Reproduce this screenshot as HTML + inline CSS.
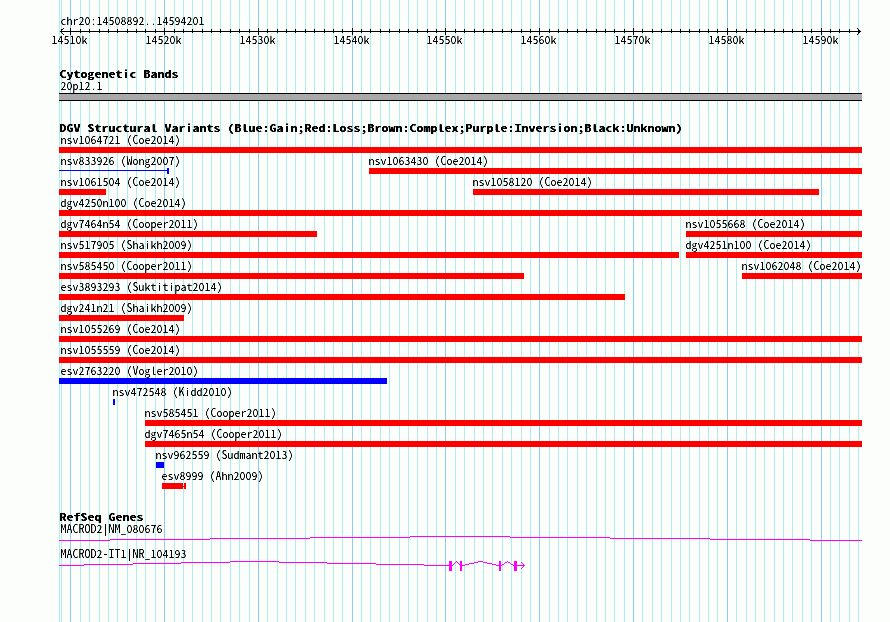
<!DOCTYPE html>
<html lang="en"><head><meta charset="utf-8"><title>chr20:14508892..14594201</title>
<style>
html,body{margin:0;padding:0;background:#fcfefb;}
body{width:890px;height:622px;overflow:hidden;}
svg{display:block;}
.s{font-family:"Noto Sans Mono CJK JP","DejaVu Sans Mono","Liberation Mono",monospace;font-size:12px;fill:#000;}
.b{font-family:"Noto Sans Mono CJK JP","DejaVu Sans Mono","Liberation Mono",monospace;font-size:14px;font-weight:bold;fill:#000;}
</style></head><body>
<svg width="890" height="622" viewBox="0 0 890 622" shape-rendering="crispEdges">
<rect x="0" y="0" width="890" height="622" fill="#fcfefb"/>
<g id="grid">
<rect x="59" y="0" width="1" height="622" fill="#b0eeee"/>
<rect x="61" y="0" width="1" height="622" fill="#b0eeee"/>
<rect x="70" y="0" width="1" height="622" fill="#8ccdf0"/>
<rect x="80" y="0" width="1" height="622" fill="#b0eeee"/>
<rect x="89" y="0" width="1" height="622" fill="#b0eeee"/>
<rect x="99" y="0" width="1" height="622" fill="#b0eeee"/>
<rect x="108" y="0" width="1" height="622" fill="#b0eeee"/>
<rect x="117" y="0" width="1" height="622" fill="#b0eeee"/>
<rect x="127" y="0" width="1" height="622" fill="#b0eeee"/>
<rect x="136" y="0" width="1" height="622" fill="#b0eeee"/>
<rect x="145" y="0" width="1" height="622" fill="#b0eeee"/>
<rect x="155" y="0" width="1" height="622" fill="#b0eeee"/>
<rect x="164" y="0" width="1" height="622" fill="#8ccdf0"/>
<rect x="174" y="0" width="1" height="622" fill="#b0eeee"/>
<rect x="183" y="0" width="1" height="622" fill="#b0eeee"/>
<rect x="192" y="0" width="1" height="622" fill="#b0eeee"/>
<rect x="202" y="0" width="1" height="622" fill="#b0eeee"/>
<rect x="211" y="0" width="1" height="622" fill="#b0eeee"/>
<rect x="220" y="0" width="1" height="622" fill="#b0eeee"/>
<rect x="230" y="0" width="1" height="622" fill="#b0eeee"/>
<rect x="239" y="0" width="1" height="622" fill="#b0eeee"/>
<rect x="249" y="0" width="1" height="622" fill="#b0eeee"/>
<rect x="258" y="0" width="1" height="622" fill="#8ccdf0"/>
<rect x="267" y="0" width="1" height="622" fill="#b0eeee"/>
<rect x="277" y="0" width="1" height="622" fill="#b0eeee"/>
<rect x="286" y="0" width="1" height="622" fill="#b0eeee"/>
<rect x="295" y="0" width="1" height="622" fill="#b0eeee"/>
<rect x="305" y="0" width="1" height="622" fill="#b0eeee"/>
<rect x="314" y="0" width="1" height="622" fill="#b0eeee"/>
<rect x="324" y="0" width="1" height="622" fill="#b0eeee"/>
<rect x="333" y="0" width="1" height="622" fill="#b0eeee"/>
<rect x="342" y="0" width="1" height="622" fill="#b0eeee"/>
<rect x="352" y="0" width="1" height="622" fill="#8ccdf0"/>
<rect x="361" y="0" width="1" height="622" fill="#b0eeee"/>
<rect x="370" y="0" width="1" height="622" fill="#b0eeee"/>
<rect x="380" y="0" width="1" height="622" fill="#b0eeee"/>
<rect x="389" y="0" width="1" height="622" fill="#b0eeee"/>
<rect x="399" y="0" width="1" height="622" fill="#b0eeee"/>
<rect x="408" y="0" width="1" height="622" fill="#b0eeee"/>
<rect x="417" y="0" width="1" height="622" fill="#b0eeee"/>
<rect x="427" y="0" width="1" height="622" fill="#b0eeee"/>
<rect x="436" y="0" width="1" height="622" fill="#b0eeee"/>
<rect x="445" y="0" width="1" height="622" fill="#8ccdf0"/>
<rect x="455" y="0" width="1" height="622" fill="#b0eeee"/>
<rect x="464" y="0" width="1" height="622" fill="#b0eeee"/>
<rect x="474" y="0" width="1" height="622" fill="#b0eeee"/>
<rect x="483" y="0" width="1" height="622" fill="#b0eeee"/>
<rect x="492" y="0" width="1" height="622" fill="#b0eeee"/>
<rect x="502" y="0" width="1" height="622" fill="#b0eeee"/>
<rect x="511" y="0" width="1" height="622" fill="#b0eeee"/>
<rect x="521" y="0" width="1" height="622" fill="#b0eeee"/>
<rect x="530" y="0" width="1" height="622" fill="#b0eeee"/>
<rect x="539" y="0" width="1" height="622" fill="#8ccdf0"/>
<rect x="549" y="0" width="1" height="622" fill="#b0eeee"/>
<rect x="558" y="0" width="1" height="622" fill="#b0eeee"/>
<rect x="567" y="0" width="1" height="622" fill="#b0eeee"/>
<rect x="577" y="0" width="1" height="622" fill="#b0eeee"/>
<rect x="586" y="0" width="1" height="622" fill="#b0eeee"/>
<rect x="596" y="0" width="1" height="622" fill="#b0eeee"/>
<rect x="605" y="0" width="1" height="622" fill="#b0eeee"/>
<rect x="614" y="0" width="1" height="622" fill="#b0eeee"/>
<rect x="624" y="0" width="1" height="622" fill="#b0eeee"/>
<rect x="633" y="0" width="1" height="622" fill="#8ccdf0"/>
<rect x="642" y="0" width="1" height="622" fill="#b0eeee"/>
<rect x="652" y="0" width="1" height="622" fill="#b0eeee"/>
<rect x="661" y="0" width="1" height="622" fill="#b0eeee"/>
<rect x="671" y="0" width="1" height="622" fill="#b0eeee"/>
<rect x="680" y="0" width="1" height="622" fill="#b0eeee"/>
<rect x="689" y="0" width="1" height="622" fill="#b0eeee"/>
<rect x="699" y="0" width="1" height="622" fill="#b0eeee"/>
<rect x="708" y="0" width="1" height="622" fill="#b0eeee"/>
<rect x="717" y="0" width="1" height="622" fill="#b0eeee"/>
<rect x="727" y="0" width="1" height="622" fill="#8ccdf0"/>
<rect x="736" y="0" width="1" height="622" fill="#b0eeee"/>
<rect x="746" y="0" width="1" height="622" fill="#b0eeee"/>
<rect x="755" y="0" width="1" height="622" fill="#b0eeee"/>
<rect x="764" y="0" width="1" height="622" fill="#b0eeee"/>
<rect x="774" y="0" width="1" height="622" fill="#b0eeee"/>
<rect x="783" y="0" width="1" height="622" fill="#b0eeee"/>
<rect x="792" y="0" width="1" height="622" fill="#b0eeee"/>
<rect x="802" y="0" width="1" height="622" fill="#b0eeee"/>
<rect x="811" y="0" width="1" height="622" fill="#b0eeee"/>
<rect x="821" y="0" width="1" height="622" fill="#8ccdf0"/>
<rect x="830" y="0" width="1" height="622" fill="#b0eeee"/>
<rect x="839" y="0" width="1" height="622" fill="#b0eeee"/>
<rect x="849" y="0" width="1" height="622" fill="#b0eeee"/>
<rect x="858" y="0" width="1" height="622" fill="#b0eeee"/>
</g>
<g id="ruler" fill="#000">
<rect x="60" y="31" width="801" height="1"/>
<rect x="61" y="29" width="1" height="4"/>
<rect x="70" y="28" width="1" height="7"/>
<rect x="80" y="29" width="1" height="4"/>
<rect x="89" y="29" width="1" height="4"/>
<rect x="99" y="29" width="1" height="4"/>
<rect x="108" y="29" width="1" height="4"/>
<rect x="117" y="29" width="1" height="4"/>
<rect x="127" y="29" width="1" height="4"/>
<rect x="136" y="29" width="1" height="4"/>
<rect x="145" y="29" width="1" height="4"/>
<rect x="155" y="29" width="1" height="4"/>
<rect x="164" y="28" width="1" height="7"/>
<rect x="174" y="29" width="1" height="4"/>
<rect x="183" y="29" width="1" height="4"/>
<rect x="192" y="29" width="1" height="4"/>
<rect x="202" y="29" width="1" height="4"/>
<rect x="211" y="29" width="1" height="4"/>
<rect x="220" y="29" width="1" height="4"/>
<rect x="230" y="29" width="1" height="4"/>
<rect x="239" y="29" width="1" height="4"/>
<rect x="249" y="29" width="1" height="4"/>
<rect x="258" y="28" width="1" height="7"/>
<rect x="267" y="29" width="1" height="4"/>
<rect x="277" y="29" width="1" height="4"/>
<rect x="286" y="29" width="1" height="4"/>
<rect x="295" y="29" width="1" height="4"/>
<rect x="305" y="29" width="1" height="4"/>
<rect x="314" y="29" width="1" height="4"/>
<rect x="324" y="29" width="1" height="4"/>
<rect x="333" y="29" width="1" height="4"/>
<rect x="342" y="29" width="1" height="4"/>
<rect x="352" y="28" width="1" height="7"/>
<rect x="361" y="29" width="1" height="4"/>
<rect x="370" y="29" width="1" height="4"/>
<rect x="380" y="29" width="1" height="4"/>
<rect x="389" y="29" width="1" height="4"/>
<rect x="399" y="29" width="1" height="4"/>
<rect x="408" y="29" width="1" height="4"/>
<rect x="417" y="29" width="1" height="4"/>
<rect x="427" y="29" width="1" height="4"/>
<rect x="436" y="29" width="1" height="4"/>
<rect x="445" y="28" width="1" height="7"/>
<rect x="455" y="29" width="1" height="4"/>
<rect x="464" y="29" width="1" height="4"/>
<rect x="474" y="29" width="1" height="4"/>
<rect x="483" y="29" width="1" height="4"/>
<rect x="492" y="29" width="1" height="4"/>
<rect x="502" y="29" width="1" height="4"/>
<rect x="511" y="29" width="1" height="4"/>
<rect x="521" y="29" width="1" height="4"/>
<rect x="530" y="29" width="1" height="4"/>
<rect x="539" y="28" width="1" height="7"/>
<rect x="549" y="29" width="1" height="4"/>
<rect x="558" y="29" width="1" height="4"/>
<rect x="567" y="29" width="1" height="4"/>
<rect x="577" y="29" width="1" height="4"/>
<rect x="586" y="29" width="1" height="4"/>
<rect x="596" y="29" width="1" height="4"/>
<rect x="605" y="29" width="1" height="4"/>
<rect x="614" y="29" width="1" height="4"/>
<rect x="624" y="29" width="1" height="4"/>
<rect x="633" y="28" width="1" height="7"/>
<rect x="642" y="29" width="1" height="4"/>
<rect x="652" y="29" width="1" height="4"/>
<rect x="661" y="29" width="1" height="4"/>
<rect x="671" y="29" width="1" height="4"/>
<rect x="680" y="29" width="1" height="4"/>
<rect x="689" y="29" width="1" height="4"/>
<rect x="699" y="29" width="1" height="4"/>
<rect x="708" y="29" width="1" height="4"/>
<rect x="717" y="29" width="1" height="4"/>
<rect x="727" y="28" width="1" height="7"/>
<rect x="736" y="29" width="1" height="4"/>
<rect x="746" y="29" width="1" height="4"/>
<rect x="755" y="29" width="1" height="4"/>
<rect x="764" y="29" width="1" height="4"/>
<rect x="774" y="29" width="1" height="4"/>
<rect x="783" y="29" width="1" height="4"/>
<rect x="792" y="29" width="1" height="4"/>
<rect x="802" y="29" width="1" height="4"/>
<rect x="811" y="29" width="1" height="4"/>
<rect x="821" y="28" width="1" height="7"/>
<rect x="830" y="29" width="1" height="4"/>
<rect x="839" y="29" width="1" height="4"/>
<rect x="849" y="29" width="1" height="4"/>
<rect x="858" y="29" width="1" height="4"/>
</g>
<g id="arrowheads">
<rect x="61" y="30" width="1" height="1" fill="#000"/>
<rect x="62" y="29" width="1" height="1" fill="#000"/>
<rect x="63" y="28" width="1" height="1" fill="#000"/>
<rect x="61" y="32" width="1" height="1" fill="#000"/>
<rect x="62" y="33" width="1" height="1" fill="#000"/>
<rect x="63" y="34" width="1" height="1" fill="#000"/>
<rect x="859" y="30" width="1" height="1" fill="#000"/>
<rect x="858" y="29" width="1" height="1" fill="#000"/>
<rect x="857" y="28" width="1" height="1" fill="#000"/>
<rect x="859" y="32" width="1" height="1" fill="#000"/>
<rect x="858" y="33" width="1" height="1" fill="#000"/>
<rect x="857" y="34" width="1" height="1" fill="#000"/>
</g>
<rect x="59" y="93" width="803" height="8" fill="#000"/>
<rect x="59" y="94" width="803" height="6" fill="#a9a9a9"/>
<rect x="59" y="147" width="803" height="6" fill="#ff0000"/>
<rect x="59" y="170" width="110" height="1" fill="#0000ff"/>
<rect x="167" y="168" width="2" height="6" fill="#0000ff"/>
<rect x="369" y="168" width="493" height="6" fill="#ff0000"/>
<rect x="59" y="189" width="47" height="6" fill="#ff0000"/>
<rect x="473" y="189" width="346" height="6" fill="#ff0000"/>
<rect x="59" y="210" width="803" height="6" fill="#ff0000"/>
<rect x="59" y="231" width="258" height="6" fill="#ff0000"/>
<rect x="686" y="231" width="176" height="6" fill="#ff0000"/>
<rect x="59" y="252" width="620" height="6" fill="#ff0000"/>
<rect x="686" y="252" width="176" height="6" fill="#ff0000"/>
<rect x="59" y="273" width="465" height="6" fill="#ff0000"/>
<rect x="742" y="273" width="120" height="6" fill="#ff0000"/>
<rect x="59" y="294" width="566" height="6" fill="#ff0000"/>
<rect x="59" y="315" width="125" height="6" fill="#ff0000"/>
<rect x="59" y="336" width="803" height="6" fill="#ff0000"/>
<rect x="59" y="357" width="803" height="6" fill="#ff0000"/>
<rect x="59" y="378" width="328" height="6" fill="#0000ff"/>
<rect x="113" y="399" width="2" height="6" fill="#0000ff"/>
<rect x="145" y="420" width="717" height="6" fill="#ff0000"/>
<rect x="145" y="441" width="717" height="6" fill="#ff0000"/>
<rect x="156" y="462" width="8" height="6" fill="#0000ff"/>
<rect x="162" y="483" width="21" height="6" fill="#ff0000"/>
<rect x="183" y="486" width="1" height="1" fill="#ff0000"/>
<rect x="184" y="483" width="2" height="6" fill="#ff0000"/>
<g id="genes">
<rect x="59" y="540" width="51" height="1" fill="#ff00ff"/>
<rect x="110" y="539" width="100" height="1" fill="#ff00ff"/>
<rect x="210" y="538" width="100" height="1" fill="#ff00ff"/>
<rect x="310" y="537" width="100" height="1" fill="#ff00ff"/>
<rect x="410" y="536" width="100" height="1" fill="#ff00ff"/>
<rect x="510" y="537" width="100" height="1" fill="#ff00ff"/>
<rect x="610" y="538" width="100" height="1" fill="#ff00ff"/>
<rect x="710" y="539" width="100" height="1" fill="#ff00ff"/>
<rect x="810" y="540" width="52" height="1" fill="#ff00ff"/>
<rect x="59" y="565" width="25" height="1" fill="#ff00ff"/>
<rect x="84" y="564" width="49" height="1" fill="#ff00ff"/>
<rect x="133" y="563" width="48" height="1" fill="#ff00ff"/>
<rect x="181" y="562" width="49" height="1" fill="#ff00ff"/>
<rect x="230" y="561" width="49" height="1" fill="#ff00ff"/>
<rect x="279" y="562" width="48" height="1" fill="#ff00ff"/>
<rect x="327" y="563" width="49" height="1" fill="#ff00ff"/>
<rect x="376" y="564" width="48" height="1" fill="#ff00ff"/>
<rect x="424" y="565" width="25" height="1" fill="#ff00ff"/>
<rect x="449" y="561" width="3" height="10" fill="#ff00ff"/>
<rect x="460" y="561" width="2" height="10" fill="#ff00ff"/>
<rect x="499" y="561" width="2" height="10" fill="#ff00ff"/>
<rect x="514" y="561" width="3" height="10" fill="#ff00ff"/>
</g>
<g id="hats">
<rect x="456" y="561" width="1" height="1" fill="#ff00ff"/>
<rect x="478" y="561" width="5" height="1" fill="#ff00ff"/>
<rect x="507" y="561" width="1" height="1" fill="#ff00ff"/>
<rect x="455" y="562" width="1" height="1" fill="#ff00ff"/>
<rect x="457" y="562" width="1" height="1" fill="#ff00ff"/>
<rect x="474" y="562" width="4" height="1" fill="#ff00ff"/>
<rect x="483" y="562" width="4" height="1" fill="#ff00ff"/>
<rect x="505" y="562" width="2" height="1" fill="#ff00ff"/>
<rect x="508" y="562" width="2" height="1" fill="#ff00ff"/>
<rect x="521" y="562" width="1" height="1" fill="#ff00ff"/>
<rect x="454" y="563" width="1" height="1" fill="#ff00ff"/>
<rect x="458" y="563" width="1" height="1" fill="#ff00ff"/>
<rect x="469" y="563" width="5" height="1" fill="#ff00ff"/>
<rect x="487" y="563" width="5" height="1" fill="#ff00ff"/>
<rect x="504" y="563" width="1" height="1" fill="#ff00ff"/>
<rect x="510" y="563" width="1" height="1" fill="#ff00ff"/>
<rect x="522" y="563" width="1" height="1" fill="#ff00ff"/>
<rect x="453" y="564" width="1" height="1" fill="#ff00ff"/>
<rect x="459" y="564" width="1" height="1" fill="#ff00ff"/>
<rect x="465" y="564" width="4" height="1" fill="#ff00ff"/>
<rect x="492" y="564" width="4" height="1" fill="#ff00ff"/>
<rect x="502" y="564" width="2" height="1" fill="#ff00ff"/>
<rect x="511" y="564" width="2" height="1" fill="#ff00ff"/>
<rect x="523" y="564" width="1" height="1" fill="#ff00ff"/>
<rect x="452" y="565" width="1" height="1" fill="#ff00ff"/>
<rect x="462" y="565" width="3" height="1" fill="#ff00ff"/>
<rect x="496" y="565" width="3" height="1" fill="#ff00ff"/>
<rect x="501" y="565" width="1" height="1" fill="#ff00ff"/>
<rect x="513" y="565" width="1" height="1" fill="#ff00ff"/>
<rect x="517" y="565" width="8" height="1" fill="#ff00ff"/>
<rect x="523" y="566" width="1" height="1" fill="#ff00ff"/>
<rect x="522" y="567" width="1" height="1" fill="#ff00ff"/>
<rect x="521" y="568" width="1" height="1" fill="#ff00ff"/>
</g>
<defs><filter id="crisp" x="0" y="0" width="100%" height="100%" filterUnits="userSpaceOnUse" primitiveUnits="userSpaceOnUse" color-interpolation-filters="sRGB"><feComponentTransfer><feFuncA type="linear" slope="2" intercept="-0.5"/></feComponentTransfer></filter></defs>
<g id="labels" filter="url(#crisp)">
<text class="s" transform="translate(60.5,25) scale(1,0.92)" textLength="144" lengthAdjust="spacingAndGlyphs">chr20:14508892..14594201</text>
<text class="s" transform="translate(51.5,44) scale(1,0.92)" textLength="36" lengthAdjust="spacingAndGlyphs">14510k</text>
<text class="s" transform="translate(145.5,44) scale(1,0.92)" textLength="36" lengthAdjust="spacingAndGlyphs">14520k</text>
<text class="s" transform="translate(239.5,44) scale(1,0.92)" textLength="36" lengthAdjust="spacingAndGlyphs">14530k</text>
<text class="s" transform="translate(333.5,44) scale(1,0.92)" textLength="36" lengthAdjust="spacingAndGlyphs">14540k</text>
<text class="s" transform="translate(426.5,44) scale(1,0.92)" textLength="36" lengthAdjust="spacingAndGlyphs">14550k</text>
<text class="s" transform="translate(520.5,44) scale(1,0.92)" textLength="36" lengthAdjust="spacingAndGlyphs">14560k</text>
<text class="s" transform="translate(614.5,44) scale(1,0.92)" textLength="36" lengthAdjust="spacingAndGlyphs">14570k</text>
<text class="s" transform="translate(708.5,44) scale(1,0.92)" textLength="36" lengthAdjust="spacingAndGlyphs">14580k</text>
<text class="s" transform="translate(802.5,44) scale(1,0.92)" textLength="36" lengthAdjust="spacingAndGlyphs">14590k</text>
<text class="s" transform="translate(60.5,90) scale(1,0.92)" textLength="42" lengthAdjust="spacingAndGlyphs">20p12.1</text>
<text class="s" transform="translate(60.5,144) scale(1,0.92)" textLength="120" lengthAdjust="spacingAndGlyphs">nsv1064721 (Coe2014)</text>
<text class="s" transform="translate(60.5,165) scale(1,0.92)" textLength="120" lengthAdjust="spacingAndGlyphs">nsv833926 (Wong2007)</text>
<text class="s" transform="translate(368.5,165) scale(1,0.92)" textLength="120" lengthAdjust="spacingAndGlyphs">nsv1063430 (Coe2014)</text>
<text class="s" transform="translate(60.5,186) scale(1,0.92)" textLength="120" lengthAdjust="spacingAndGlyphs">nsv1061504 (Coe2014)</text>
<text class="s" transform="translate(472.5,186) scale(1,0.92)" textLength="120" lengthAdjust="spacingAndGlyphs">nsv1058120 (Coe2014)</text>
<text class="s" transform="translate(60.5,207) scale(1,0.92)" textLength="126" lengthAdjust="spacingAndGlyphs">dgv4250n100 (Coe2014)</text>
<text class="s" transform="translate(60.5,228) scale(1,0.92)" textLength="138" lengthAdjust="spacingAndGlyphs">dgv7464n54 (Cooper2011)</text>
<text class="s" transform="translate(685.5,228) scale(1,0.92)" textLength="120" lengthAdjust="spacingAndGlyphs">nsv1055668 (Coe2014)</text>
<text class="s" transform="translate(60.5,249) scale(1,0.92)" textLength="132" lengthAdjust="spacingAndGlyphs">nsv517905 (Shaikh2009)</text>
<text class="s" transform="translate(685.5,249) scale(1,0.92)" textLength="126" lengthAdjust="spacingAndGlyphs">dgv4251n100 (Coe2014)</text>
<text class="s" transform="translate(60.5,270) scale(1,0.92)" textLength="132" lengthAdjust="spacingAndGlyphs">nsv585450 (Cooper2011)</text>
<text class="s" transform="translate(741.5,270) scale(1,0.92)" textLength="120" lengthAdjust="spacingAndGlyphs">nsv1062048 (Coe2014)</text>
<text class="s" transform="translate(60.5,291) scale(1,0.92)" textLength="162" lengthAdjust="spacingAndGlyphs">esv3893293 (Suktitipat2014)</text>
<text class="s" transform="translate(60.5,312) scale(1,0.92)" textLength="132" lengthAdjust="spacingAndGlyphs">dgv241n21 (Shaikh2009)</text>
<text class="s" transform="translate(60.5,333) scale(1,0.92)" textLength="120" lengthAdjust="spacingAndGlyphs">nsv1055269 (Coe2014)</text>
<text class="s" transform="translate(60.5,354) scale(1,0.92)" textLength="120" lengthAdjust="spacingAndGlyphs">nsv1055559 (Coe2014)</text>
<text class="s" transform="translate(60.5,375) scale(1,0.92)" textLength="138" lengthAdjust="spacingAndGlyphs">esv2763220 (Vogler2010)</text>
<text class="s" transform="translate(112.5,396) scale(1,0.92)" textLength="120" lengthAdjust="spacingAndGlyphs">nsv472548 (Kidd2010)</text>
<text class="s" transform="translate(144.5,417) scale(1,0.92)" textLength="132" lengthAdjust="spacingAndGlyphs">nsv585451 (Cooper2011)</text>
<text class="s" transform="translate(144.5,438) scale(1,0.92)" textLength="138" lengthAdjust="spacingAndGlyphs">dgv7465n54 (Cooper2011)</text>
<text class="s" transform="translate(155.5,459) scale(1,0.92)" textLength="138" lengthAdjust="spacingAndGlyphs">nsv962559 (Sudmant2013)</text>
<text class="s" transform="translate(161.5,480) scale(1,0.92)" textLength="102" lengthAdjust="spacingAndGlyphs">esv8999 (Ahn2009)</text>
<text class="s" transform="translate(60.5,533) scale(1,0.92)" textLength="102" lengthAdjust="spacingAndGlyphs">MACROD2|NM_080676</text>
<text class="s" transform="translate(60.5,558) scale(1,0.92)" textLength="126" lengthAdjust="spacingAndGlyphs">MACROD2-IT1|NR_104193</text>
</g>
<defs><filter id="crispb" x="0" y="0" width="100%" height="100%" filterUnits="userSpaceOnUse" primitiveUnits="userSpaceOnUse" color-interpolation-filters="sRGB"><feComponentTransfer><feFuncA type="linear" slope="2" intercept="-0.3"/></feComponentTransfer></filter></defs>
<g id="titles" filter="url(#crispb)">
<text class="b" transform="translate(59.5,78) scale(1,0.71)" textLength="119" lengthAdjust="spacingAndGlyphs">Cytogenetic Bands</text>
<text class="b" transform="translate(59.5,132) scale(1,0.71)" textLength="623" lengthAdjust="spacingAndGlyphs">DGV Structural Variants (Blue:Gain;Red:Loss;Brown:Complex;Purple:Inversion;Black:Unknown)</text>
<text class="b" transform="translate(59.5,521) scale(1,0.71)" textLength="84" lengthAdjust="spacingAndGlyphs">RefSeq Genes</text>
</g>
</svg>
</body></html>
